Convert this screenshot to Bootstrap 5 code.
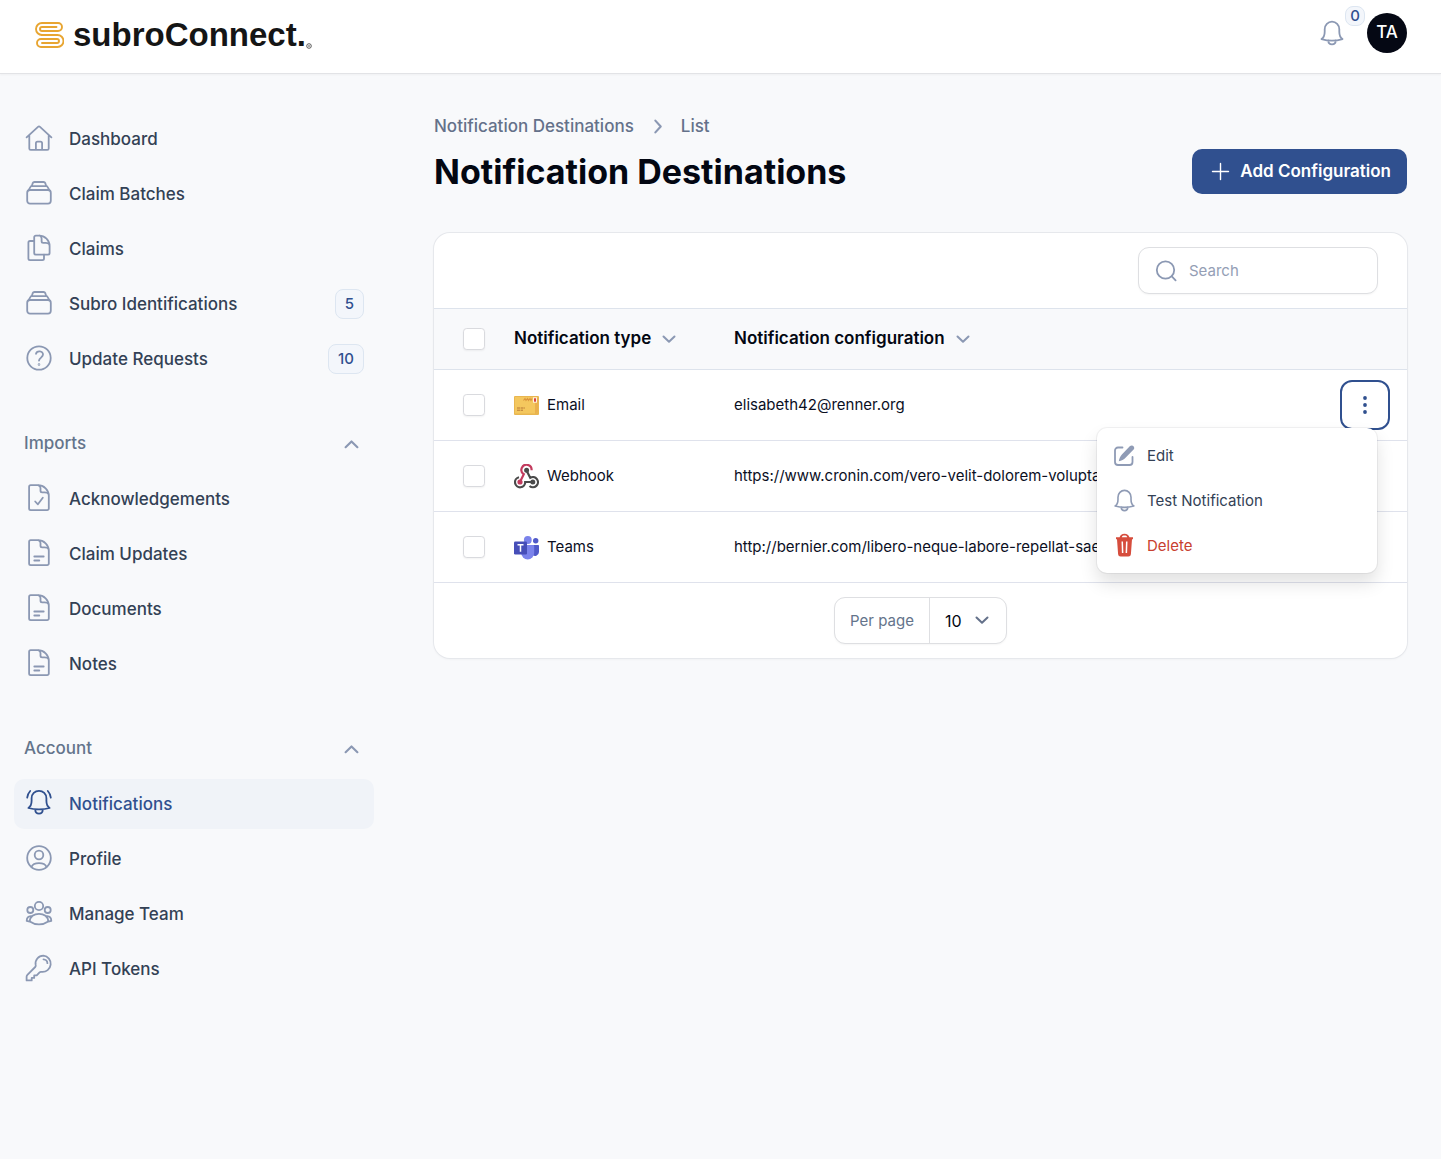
<!DOCTYPE html>
<html lang="en">
<head>
<meta charset="utf-8">
<meta name="viewport" content="width=device-width, initial-scale=1">
<title>Notification Destinations - subroConnect</title>
<link href="https://cdn.jsdelivr.net/npm/bootstrap@5.3.0/dist/css/bootstrap.min.css" rel="stylesheet">
<style>
:root{--ink:#030712;--slate:#334155;--muted:#64748b;--icon:#8b98b3;--line:#dde3ec;--brand:#30508f}
body{font-family:Inter,"Liberation Sans",sans-serif;font-size:15px;line-height:24px;color:#0b0f1f;background:#f8f9fb;min-height:100vh}
svg{flex:none;display:block}
.stroke-icon{fill:none;stroke:currentColor;stroke-width:1.8;stroke-linecap:round;stroke-linejoin:round}
.chev-icon{stroke-width:2}
.topbar{height:74px;padding:13px 34px 0;border-bottom:1px solid #e2e3e6;box-shadow:0 1px 2px rgba(0,0,0,.04)}
.brand-name{font-family:"Liberation Sans",sans-serif;font-size:33px;line-height:40px;font-weight:700;color:#151515}
.brand-link{gap:9px;padding-top:2px}
.bell-btn{color:var(--icon);width:39px;height:40px}
.count-pill{border:1px solid #dde6f1;background:#f3f6fb;color:var(--brand);font-weight:500;border-radius:8px}
.bell-count{font-size:15px;line-height:18px;width:20px;top:-7px;right:-6px;text-align:center}
.avatar{width:40px;height:40px;background:#050814;font-size:17px;font-weight:500}
.side{width:400px;padding:40px 26px 40px 14px;flex:none}
.side-list{display:flex;flex-direction:column;gap:5px}
.side-link{height:50px;padding:0 10px;gap:15px;border-radius:10px;color:var(--slate);font-size:17px;font-weight:500}
.side-link svg{color:var(--icon)}
.side-link.active,.side-link.active svg{color:var(--brand)}
.side-link.active{background:#f0f3f8}
.side-count{font-size:15px;line-height:28px;padding:0 9px}
.side-group{margin-top:35px}
.side-toggle{height:50px;margin-bottom:5px;padding:0 15px 0 10px;font-size:17px;font-weight:500;color:var(--muted)}
.side-toggle svg,.sort-btn svg{color:var(--icon)}
.page-main{padding:40px 34px;min-width:0}
.crumbs{gap:16px;font-size:17px;line-height:25px;font-weight:500;color:#64718a}
.crumbs svg{color:var(--icon)}
.page-title{font-size:34px;line-height:45px;font-weight:700;margin:10px 0 0;color:var(--ink)}
.add-btn{background:var(--brand);color:#fff;height:45px;padding:0 15px;gap:7px;border-radius:10px;font-size:17px;font-weight:600}
.add-btn:hover{background:#284682;color:#fff}
.panel{margin-top:39px;background:#fff;border-radius:16px;box-shadow:0 0 0 1px #e6e8ec,0 1px 3px rgba(0,0,0,.06)}
.panel-bar{padding:14px 29px}
.field-box{height:47px;border:1px solid #dedfe2;border-radius:11px;background:#fff;box-shadow:0 1px 2px rgba(0,0,0,.04)}
.search-box{width:240px;padding:0 14px;gap:10px;color:var(--icon)}
.search-box input{font-size:15px;color:var(--ink)}
.search-box input::placeholder{color:#949eb5}
.dest-table{--bs-table-bg:transparent;--bs-table-color:#0b0f1f;border-top:1px solid var(--line);table-layout:fixed}
.dest-table th,.dest-table td{padding:0 15px;height:71px;border-bottom:1px solid #dfe2ec;vertical-align:middle;white-space:nowrap}
.dest-table thead th{height:61px;background:#f8f9fb;border-bottom-color:var(--line)}
.dest-table .pick-cell{width:65px;padding:0 0 0 29px}
.type-cell{width:220px}
.dest-table .act-cell{width:80px;padding:0 17px 0 0}
.pick-cell input{display:block;width:22px;height:22px;margin:0;border:1px solid #d9dade;border-radius:6px;box-shadow:0 1px 2px rgba(0,0,0,.05)}
.sort-btn{font-size:17px;font-weight:600;color:var(--ink);gap:7px}
.act-btn{width:50px;height:50px;border:2px solid var(--brand);border-radius:12px;color:var(--brand)}
.act-menu{top:48px;right:13px;left:auto;width:280px;padding:5px;border:0;border-radius:10px;box-shadow:0 0 0 1px rgba(3,7,18,.05),0 10px 18px rgba(0,0,0,.12);z-index:5}
.act-menu .dropdown-item{height:45px;padding:0 10px;gap:10px;border-radius:8px;color:var(--slate);font-size:15px}
.act-menu .dropdown-item svg{color:#8f9bb5}
.act-menu .danger-item{color:#c8402f}
.act-menu .danger-item svg{color:#d64d3d}
.per-label{padding:0 15px;line-height:45px;color:var(--muted);border-right:1px solid #dedfe2}
.per-select{appearance:none;border:0;background:none;height:45px;width:76px;padding:0 15px;font-size:16px;color:var(--ink)}
.per-chev{right:17px;top:15px;color:#64718a;pointer-events:none}
</style>
</head>
<body class="d-flex flex-column">
<svg width="0" height="0" class="position-absolute" aria-hidden="true">
<symbol id="i-home" viewBox="0 0 30 30"><path d="M2.600 13.400 14 2.800a1.500 1.500 0 0 1 2 0l11.400 10.600M5.300 11v13.400a1.400 1.400 0 0 0 1.400 1.400h16.600a1.400 1.400 0 0 0 1.400-1.400V11M11.900 25.500v-6.200a1.600 1.600 0 0 1 1.600-1.600h3a1.600 1.600 0 0 1 1.600 1.600v6.200"/></symbol>
<symbol id="i-stack" viewBox="0 0 30 30"><rect x="3.200" y="11" width="23.600" height="13.600" rx="2.800"/><path d="M4.400 11.400 7 7.100h16l2.600 4.300M7.800 7l.9-2.800A1.900 1.900 0 0 1 10.500 3h9a1.900 1.900 0 0 1 1.800 1.200l.9 2.800"/></symbol>
<symbol id="i-copy" viewBox="0 0 30 30"><path d="M10.200 7H6a1.600 1.600 0 0 0-1.600 1.600v16A1.600 1.600 0 0 0 6 26.200h12.400a1.600 1.600 0 0 0 1.600-1.600v-4"/><path d="M11.800 1.600h3.400c5.600 0 10.400 4.600 10.400 10.300v7.200a1.600 1.600 0 0 1-1.600 1.600H11.800a1.600 1.600 0 0 1-1.600-1.600V3.200a1.600 1.600 0 0 1 1.600-1.600zM15.600 1.700c1.500.5 2 1.400 2 2.900v2.600a1.600 1.600 0 0 0 1.600 1.600h2.600c1.700 0 2.800.6 3.400 1.500"/></symbol>
<symbol id="i-help" viewBox="0 0 30 30"><circle cx="15" cy="14" r="11.700"/><path d="M12 9.800c.8-3.600 7.400-3.200 7 .9-.3 2.800-3.700 3-4 6"/><circle cx="15" cy="20.500" r=".4"/></symbol>
<symbol id="i-doc" viewBox="0 0 30 30"><path d="M6.700 1.200h7.100c6.200 0 11 4.700 11 10.500v12.800a1.600 1.600 0 0 1-1.600 1.600H6.700a1.600 1.600 0 0 1-1.600-1.600V2.800a1.600 1.600 0 0 1 1.600-1.600zM14.500 1.300c1.400.5 2 1.300 2 2.700v2.800a1.600 1.600 0 0 0 1.600 1.600h2.500c1.900 0 3.400.6 4 1.700"/></symbol>
<symbol id="i-bell" viewBox="0 0 24 26"><path d="M1.500 19.100c2.600-1.600 3.200-4.300 3.200-7.300V9.300a7.300 7.600 0 0 1 14.600 0v2.500c0 3 .6 5.700 3.200 7.300-6 1.800-15 1.800-21 0zM8.300 20.400c0 5.200 7.400 5.200 7.400 0"/></symbol>
<symbol id="i-up" viewBox="0 0 14 14"><path d="m1.500 9.500 5.500-5.300 5.500 5.300"/></symbol>
<symbol id="i-down" viewBox="0 0 14 14"><path d="m1.500 4.500 5.500 5.300 5.500-5.300"/></symbol>
</svg>

<header class="topbar bg-white d-flex align-items-start justify-content-between">
  <a href="#" class="brand-link d-flex align-items-center text-decoration-none" aria-label="subroConnect">
    <svg width="30" height="28" viewBox="0 0 30 28" fill="none" stroke="#e8a531" stroke-width="1.900" stroke-linecap="round"><path d="M22.500 6H8a2 2 0 0 0 0 4h16a4 4 0 0 0 0-8H8a6 6 0 0 0 0 12h14.500a2 2 0 0 1 0 0"/><path d="M8 14h15.500a6 6 0 0 1 0 12H7a4 4 0 0 1 0-8h16a2 2 0 0 1 0 4H8"/></svg>
    <span class="d-flex align-items-end"><span class="brand-name">subroConnect.</span>
    <svg width="6" height="14" viewBox="0 0 6 14" fill="none" stroke="#333" stroke-width=".8"><circle cx="3" cy="5" r="2.300"/><path d="M2 5h2"/></svg></span>
  </a>
  <div class="d-flex align-items-center">
    <button type="button" class="btn p-0 border-0 bell-btn position-relative d-flex align-items-center" aria-label="Notifications">
      <svg class="stroke-icon" width="24" height="26" viewBox="0 0 24 26"><use href="#i-bell"/></svg>
      <span class="count-pill bell-count position-absolute">0</span>
    </button>
    <button type="button" class="avatar btn p-0 border-0 rounded-circle text-white ms-2">TA</button>
  </div>
</header>

<div class="d-flex flex-grow-1">
  <nav class="side" aria-label="Main">
    <div class="side-list">
      <a href="#" class="side-link d-flex align-items-center text-decoration-none"><svg class="stroke-icon" width="30" height="30"><use href="#i-home"/></svg>Dashboard</a>
      <a href="#" class="side-link d-flex align-items-center text-decoration-none"><svg class="stroke-icon" width="30" height="30"><use href="#i-stack"/></svg>Claim Batches</a>
      <a href="#" class="side-link d-flex align-items-center text-decoration-none"><svg class="stroke-icon" width="30" height="30"><use href="#i-copy"/></svg>Claims</a>
      <a href="#" class="side-link d-flex align-items-center text-decoration-none"><svg class="stroke-icon" width="30" height="30"><use href="#i-stack"/></svg>Subro Identifications<span class="count-pill side-count ms-auto">5</span></a>
      <a href="#" class="side-link d-flex align-items-center text-decoration-none"><svg class="stroke-icon" width="30" height="30"><use href="#i-help"/></svg>Update Requests<span class="count-pill side-count ms-auto">10</span></a>
    </div>
    <div class="side-group">
      <button type="button" class="side-toggle btn border-0 w-100 d-flex align-items-center justify-content-between">Imports<svg class="stroke-icon chev-icon" width="15" height="15"><use href="#i-up"/></svg></button>
      <div class="side-list">
        <a href="#" class="side-link d-flex align-items-center text-decoration-none"><svg class="stroke-icon" width="30" height="30" viewBox="0 0 30 30"><use href="#i-doc"/><path d="m11.200 17.500 2.700 2.800 4.900-6.500"/></svg>Acknowledgements</a>
        <a href="#" class="side-link d-flex align-items-center text-decoration-none"><svg class="stroke-icon" width="30" height="30" viewBox="0 0 30 30"><use href="#i-doc"/><path d="M10.300 17.500h9.400M10.300 21.500h5"/></svg>Claim Updates</a>
        <a href="#" class="side-link d-flex align-items-center text-decoration-none"><svg class="stroke-icon" width="30" height="30" viewBox="0 0 30 30"><use href="#i-doc"/><path d="M10.300 17.500h9.400M10.300 21.500h5"/></svg>Documents</a>
        <a href="#" class="side-link d-flex align-items-center text-decoration-none"><svg class="stroke-icon" width="30" height="30" viewBox="0 0 30 30"><use href="#i-doc"/><path d="M10.300 17.500h9.400M10.300 21.500h5"/></svg>Notes</a>
      </div>
    </div>
    <div class="side-group">
      <button type="button" class="side-toggle btn border-0 w-100 d-flex align-items-center justify-content-between">Account<svg class="stroke-icon chev-icon" width="15" height="15"><use href="#i-up"/></svg></button>
      <div class="side-list">
        <a href="#" class="side-link active d-flex align-items-center text-decoration-none" aria-current="page"><svg class="stroke-icon" width="30" height="30" viewBox="0 0 30 30"><path d="M4.400 19c2.500-1.600 3.200-4.200 3.200-7.200V9.200a7.400 7.400 0 0 1 14.800 0v2.600c0 3 .7 5.600 3.200 7.200-6 1.900-15.200 1.900-21.200 0zM11.200 20.500c.2 5.500 7.400 5.500 7.600 0M3.200 8.600c.2-2.700 1.300-4.700 3-6.600M26.800 8.600c-.2-2.700-1.300-4.700-3-6.600"/></svg>Notifications</a>
        <a href="#" class="side-link d-flex align-items-center text-decoration-none"><svg class="stroke-icon" width="30" height="30" viewBox="0 0 30 30"><circle cx="15" cy="14" r="11.800"/><circle cx="15" cy="11" r="4.300"/><path d="M7.500 22.800c2-5 13-5 15 0"/></svg>Profile</a>
        <a href="#" class="side-link d-flex align-items-center text-decoration-none"><svg class="stroke-icon" width="30" height="30" viewBox="0 0 30 30"><circle cx="15" cy="7" r="4.200"/><circle cx="6.300" cy="11" r="3"/><circle cx="23.700" cy="11" r="3"/><path d="M5.800 22.500C5.800 17.500 10 14.800 15 14.800s9.200 2.700 9.200 7.700c-5.500 3.900-12.900 3.900-18.400 0zM7.200 17.200c-3.100-.2-4.500 1.800-4.500 4.700l3 .8M22.800 17.200c3.100-.2 4.500 1.800 4.500 4.700l-3 .8"/></svg>Manage Team</a>
        <a href="#" class="side-link d-flex align-items-center text-decoration-none"><svg class="stroke-icon" width="30" height="30" viewBox="0 0 30 30"><path d="M19.400 1.600a7.800 7.800 0 0 0-7.700 9.400c.2.800 0 1.500-.5 2L3.400 20.800a2.600 2.600 0 0 0-.8 1.900v3.700h5.100v-2.500h2.500v-2.500h2.500l2.900-3c.5-.5 1.300-.7 2-.5a7.800 7.800 0 1 0 1.800-16.300zM19.500 5.300a4 4 0 0 1 3.900 3.900"/></svg>API Tokens</a>
      </div>
    </div>
  </nav>

  <main class="page-main flex-grow-1">
    <div class="d-flex align-items-end justify-content-between">
      <div>
        <nav class="crumbs d-flex align-items-center" aria-label="Breadcrumb"><a href="#" class="text-reset text-decoration-none">Notification Destinations</a><svg class="stroke-icon chev-icon" width="15" height="15" viewBox="0 0 14 14"><path d="m5 1.500 5 5.500-5 5.500"/></svg><a href="#" class="text-reset text-decoration-none">List</a></nav>
        <h1 class="page-title">Notification Destinations</h1>
      </div>
      <button type="button" class="add-btn btn d-flex align-items-center"><svg width="25" height="25" viewBox="0 0 25 25" stroke="#fff" stroke-width="1.400" stroke-linecap="round"><path d="M12.500 4.500v16M4.500 12.500h16"/></svg>Add Configuration</button>
    </div>

    <section class="panel">
      <div class="panel-bar d-flex justify-content-end">
        <label class="field-box search-box d-flex align-items-center">
          <svg class="stroke-icon" width="26" height="26" viewBox="0 0 26 26"><circle cx="12.500" cy="12" r="8.700"/><path d="m18.800 18.300 3.800 4"/></svg>
          <input type="search" class="border-0 bg-transparent p-0 w-100" placeholder="Search" aria-label="Search">
        </label>
      </div>
      <table class="table dest-table mb-0">
        <thead><tr>
          <th class="pick-cell"><input type="checkbox" class="form-check-input" aria-label="Select all"></th>
          <th class="type-cell"><button type="button" class="sort-btn btn border-0 p-0 d-flex align-items-center">Notification type<svg class="stroke-icon chev-icon mx-1" width="14" height="14"><use href="#i-down"/></svg></button></th>
          <th><button type="button" class="sort-btn btn border-0 p-0 d-flex align-items-center">Notification configuration<svg class="stroke-icon chev-icon mx-1" width="14" height="14"><use href="#i-down"/></svg></button></th>
          <th class="act-cell"></th>
        </tr></thead>
        <tbody>
          <tr>
            <td class="pick-cell"><input type="checkbox" class="form-check-input" aria-label="Select Email"></td>
            <td class="type-cell"><span class="d-flex align-items-center gap-2"><svg width="25" height="25" viewBox="0 0 25 25"><rect y="3" width="25" height="19" rx="1" fill="#e9b650"/><path d="M1 4h23l-3 16.500H1z" fill="#f4c75e"/><path d="M24 4v14l-3 3V8z" fill="#eab04c"/><path d="M9.500 7.500 11 5.500l1 2 1.500-2 1 2 1.500-2 1 2 1-2" fill="none" stroke="#dc963e" stroke-width="1.100"/><rect x="19" y="4.300" width="4" height="5.400" fill="#fff1e0"/><rect x="20" y="5.300" width="2" height="3.400" fill="#d8433f"/><path d="M3 15h8M3 17.200h6" stroke="#b77735" stroke-width="1" stroke-dasharray="3 .6"/></svg>Email</span></td>
            <td>elisabeth42@renner.org</td>
            <td class="act-cell"><div class="dropdown d-flex justify-content-end">
              <button type="button" class="act-btn btn p-0 d-flex align-items-center justify-content-center" aria-label="Actions" aria-expanded="true"><svg width="6" height="20" viewBox="0 0 6 20" fill="currentColor"><circle cx="3" cy="3" r="1.900"/><circle cx="3" cy="10" r="1.900"/><circle cx="3" cy="17" r="1.900"/></svg></button>
              <div class="dropdown-menu act-menu show">
                <a href="#" class="dropdown-item d-flex align-items-center"><svg width="25" height="25" viewBox="0 0 25 25" fill="none" stroke="currentColor" stroke-width="1.800"><path d="M10.500 4.500H6A3 3 0 0 0 3 7.500V19a3 3 0 0 0 3 3h11.500a3 3 0 0 0 3-3v-5" stroke-linecap="round"/><path d="M6.800 18.300c.4-2.400 1.200-5 3.300-7.100L18 3.100c2.200-2.100 5.700 1 3.600 3.400l-7.800 8c-2.100 2.100-4.200 3.400-7 3.800z" fill="currentColor" stroke="none"/></svg>Edit</a>
                <a href="#" class="dropdown-item d-flex align-items-center"><svg class="stroke-icon" width="25" height="25" viewBox="-2 -1 28 28"><use href="#i-bell" width="24" height="26"/></svg>Test Notification</a>
                <a href="#" class="dropdown-item danger-item d-flex align-items-center"><svg width="25" height="25" viewBox="0 0 25 25" fill="currentColor"><path fill-rule="evenodd" d="M4 4.200h3.600C8.300 2 9.800.8 12.500.8s4.200 1.200 4.900 3.400H21v2h-1l-1.100 15a2.500 2.500 0 0 1-2.500 2.300H8.600a2.500 2.500 0 0 1-2.500-2.300L5 6.200H4zm5.800 0h5.400c-.5-1.200-1.300-1.600-2.700-1.600s-2.200.4-2.700 1.600zM9.500 8.500l.4 11.500h1.500L11 8.500zM14 8.500 13.600 20h1.500l.4-11.500z"/></svg>Delete</a>
              </div>
            </div></td>
          </tr>
          <tr>
            <td class="pick-cell"><input type="checkbox" class="form-check-input" aria-label="Select Webhook"></td>
            <td class="type-cell"><span class="d-flex align-items-center gap-2"><svg width="25" height="25" viewBox="0 0 25 25" fill="none" stroke-width="2.200"><path d="M17.600 6.200A5.100 5.100 0 1 0 9.800 10.200L6.200 17.500" stroke="#c33b5e"/><circle cx="6" cy="18" r="1.500" fill="#c33b5e" stroke="#c33b5e"/><path d="M5 13.200A5.100 5.100 0 1 0 11.200 18H18M12.500 6.500l3.700 7.300A5.100 5.100 0 1 1 15.500 22" stroke="#4a4a4a"/><circle cx="12.600" cy="6.300" r="1.400" fill="#4a4a4a" stroke="#4a4a4a"/><circle cx="18.800" cy="18" r="1.400" fill="#4a4a4a" stroke="#4a4a4a"/></svg>Webhook</span></td>
            <td>https://www.cronin.com/vero-velit-dolorem-voluptas</td>
            <td class="act-cell"></td>
          </tr>
          <tr>
            <td class="pick-cell"><input type="checkbox" class="form-check-input" aria-label="Select Teams"></td>
            <td class="type-cell"><span class="d-flex align-items-center gap-2"><svg width="25" height="25" viewBox="0 0 25 25"><circle cx="21.700" cy="5.800" r="2.700" fill="#5059c9"/><path d="M18 10h6.200a.8.800 0 0 1 .8.800v6.200a4 4 0 0 1-7 2.600z" fill="#5059c9"/><circle cx="13.800" cy="5" r="3.900" fill="#7b83eb"/><path d="M8 10h11.200a1 1 0 0 1 1 1v7a6.500 6.500 0 0 1-13 0v-7z" fill="#7b83eb"/><rect y="6.500" width="13" height="13" rx="1.200" fill="#464eb8"/><path d="M3.500 9.800h6M6.500 9.800v7" stroke="#fff" stroke-width="1.500"/></svg>Teams</span></td>
            <td>http://bernier.com/libero-neque-labore-repellat-saepe</td>
            <td class="act-cell"></td>
          </tr>
        </tbody>
      </table>
      <div class="panel-bar d-flex justify-content-center">
        <div class="field-box d-flex">
          <label for="perPage" class="per-label">Per page</label>
          <div class="position-relative"><select id="perPage" class="per-select"><option>10</option><option>25</option><option>50</option></select><svg class="stroke-icon chev-icon per-chev position-absolute" width="14" height="14"><use href="#i-down"/></svg></div>
        </div>
      </div>
    </section>
  </main>
</div>
<script src="https://cdn.jsdelivr.net/npm/bootstrap@5.3.0/dist/js/bootstrap.bundle.min.js"></script>
</body>
</html>
